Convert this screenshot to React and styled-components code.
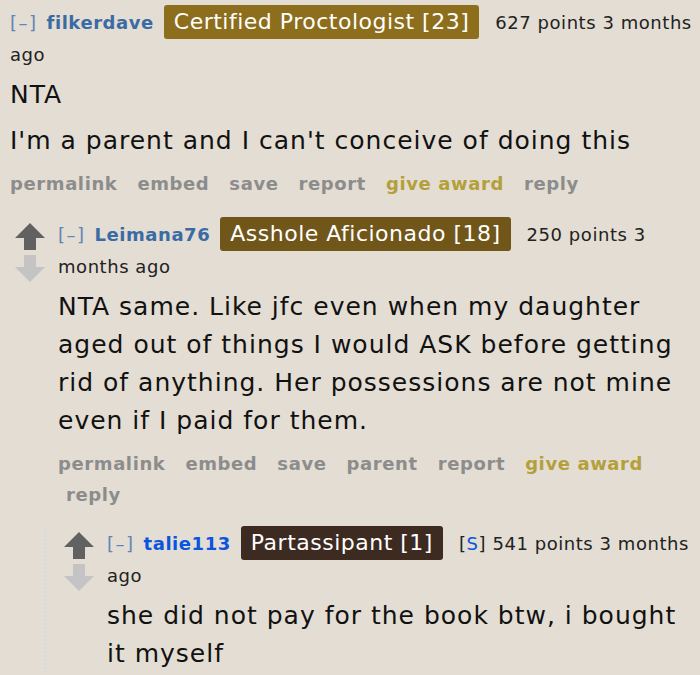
import styled, { createGlobalStyle } from "styled-components"

const GlobalStyle = createGlobalStyle`
    body {
        margin: 0;
        background: #e3ddd3;
        font-family: "DejaVu Sans", Verdana, sans-serif;
        color: #111;
    }
`

const Page = styled.div`
    width: 696px;
    padding: 7px 0 0 10px;
    box-sizing: border-box;
    overflow: hidden;
    height: 675px;
`

const CommentRow = styled.div`
    display: flex;
    align-items: flex-start;
    margin-top: ${(p) => p.$top || 0}px;
`

const Arrows = styled.div`
    flex: none;
    width: 30px;
    display: flex;
    flex-direction: column;
    gap: 5px;
    margin: 4px 13px 0 5px;
`

const Entry = styled.div`
    flex: 1;
    min-width: 0;
`

const Tagline = styled.div`
    font-size: 18px;
    line-height: 31px;
    letter-spacing: 0.55px;
    color: #222;
`

const Expand = styled.span`
    color: #5f86b5;
    letter-spacing: 1.5px;
    margin-right: 9px;
`

const Author = styled.span`
    font-weight: bold;
    color: ${(p) => (p.$op ? "#0a55e0" : "#3a6ba3")};
    margin-right: 10px;
`

const Flair = styled.span`
    display: inline-block;
    vertical-align: middle;
    background: ${(p) => p.$bg};
    color: #fff;
    font-size: 22px;
    line-height: 28px;
    letter-spacing: 0.5px;
    padding: 3px 10px;
    border-radius: 3px;
    margin: -2px 16px -2px 0;
    position: relative;
    top: -2px;
`

const Submitter = styled.span`
    color: #0a55e0;
`

const Body = styled.div`
    font-size: 25px;
    line-height: 38px;
    letter-spacing: 1px;
    margin-top: 6px;

    p {
        margin: 0 0 8px;
    }
`

const Buttons = styled.ul`
    list-style: none;
    margin: 0;
    padding: 0;
    font-size: 18px;
    line-height: 31px;
    letter-spacing: 0.6px;
    font-weight: bold;
    display: flex;
    flex-wrap: wrap;
    column-gap: 20px;
`

const Button = styled.li`
    color: ${(p) => (p.$award ? "#b3a03b" : "#8c8c8c")};
    padding-left: ${(p) => (p.$indent ? 8 : 0)}px;
`

const Child = styled.div`
    margin: 18px 0 0 34px;
    padding-left: 13px;
    border-left: 2px dotted #d5d8ec;
`

const Arrow = ({ down }) => (
    <svg width="30" height="27" viewBox="0 0 30 27">
        {down ? (
            <path d="M9 0h12v12h9L15 27L0 12h9z" fill="#c4c4c4" />
        ) : (
            <path d="M15 0l15 15h-9v12H9V15H0z" fill="#616161" />
        )}
    </svg>
)

const Comment = ({ votes, author, op, flair, flairBg, submitter, points, paras, buttons, wrapReply, top }) => (
    <CommentRow $top={top}>
        {votes && (
            <Arrows>
                <Arrow />
                <Arrow down />
            </Arrows>
        )}
        <Entry>
            <Tagline>
                <Expand>[–]</Expand>
                <Author $op={op}>{author}</Author>
                <Flair $bg={flairBg}>{flair}</Flair>
                {submitter && (
                    <>
                        [<Submitter>S</Submitter>]{" "}
                    </>
                )}
                {points} points 3 months ago
            </Tagline>
            <Body>
                {paras.map((t) => (
                    <p key={t}>{t}</p>
                ))}
            </Body>
            {buttons && (
                <Buttons>
                    {buttons.map((b) => (
                        <Button key={b} $award={b === "give award"} $indent={wrapReply && b === "reply"}>
                            {b}
                        </Button>
                    ))}
                </Buttons>
            )}
        </Entry>
    </CommentRow>
)

const App = () => {
    return (
        <>
            <GlobalStyle />
            <Page>
                <Comment
                    author="filkerdave"
                    flair="Certified Proctologist [23]"
                    flairBg="#8d6e1c"
                    points="627"
                    paras={["NTA", "I'm a parent and I can't conceive of doing this"]}
                    buttons={["permalink", "embed", "save", "report", "give award", "reply"]}
                />
                <Comment
                    top={20}
                    votes
                    author="Leimana76"
                    flair="Asshole Aficionado [18]"
                    flairBg="#71561a"
                    points="250"
                    paras={["NTA same. Like jfc even when my daughter aged out of things I would ASK before getting rid of anything. Her possessions are not mine even if I paid for them."]}
                    buttons={["permalink", "embed", "save", "parent", "report", "give award", "reply"]}
                    wrapReply
                />
                <Child>
                    <Comment
                        votes
                        op
                        author="talie113"
                        flair="Partassipant [1]"
                        flairBg="#3d2b22"
                        submitter
                        points="541"
                        paras={["she did not pay for the book btw, i bought it myself"]}
                    />
                </Child>
            </Page>
        </>
    )
}

export default App
